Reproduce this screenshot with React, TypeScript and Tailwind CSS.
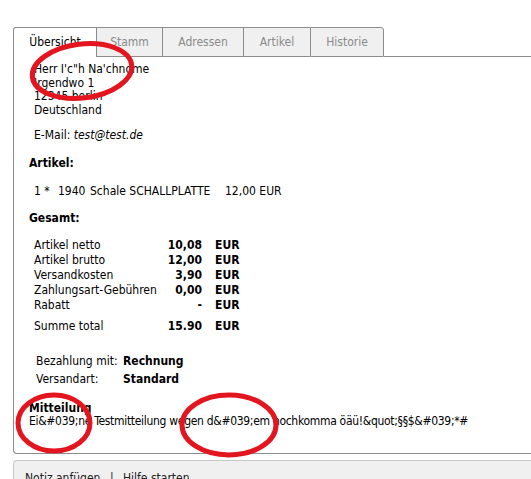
const tabs = [
  { label: "Übersicht", w: "w-[83px]", active: true },
  { label: "Stamm", w: "w-[66px]" },
  { label: "Adressen", w: "w-[81px]" },
  { label: "Artikel", w: "w-[67px]" },
  { label: "Historie", w: "w-[74px]" },
];

const totals = [
  { label: "Artikel netto", value: "10,08" },
  { label: "Artikel brutto", value: "12,00" },
  { label: "Versandkosten", value: "3,90" },
  { label: "Zahlungsart-Gebühren", value: "0,00" },
  { label: "Rabatt", value: "-" },
];

const font = { fontFamily: '"DejaVu Sans Condensed", "DejaVu Sans", sans-serif' };

function Markers() {
  // hand-drawn red circles over the order view
  return (
    <svg className="absolute inset-0 pointer-events-none" width="531" height="479">
      <g fill="none" stroke="#e3161f" strokeWidth="5">
        <ellipse cx="82" cy="71" rx="50" ry="27" transform="rotate(-7 82 71)" />
        <ellipse cx="54" cy="423" rx="36" ry="28" />
        <ellipse cx="229" cy="425" rx="47" ry="30" />
      </g>
    </svg>
  );
}

export default function App() {
  return (
    <div
      className="relative w-[531px] h-[479px] overflow-hidden bg-white text-[12px] leading-[13px] text-black"
      style={font}
    >
      <div className="pt-[27px] pl-[13px] w-[700px]">
        {/* Tabs */}
        <div className="flex h-[30px]">
          {tabs.map((t, i) => (
            <div
              key={t.label}
              className={`${t.w} flex items-center justify-center border-t border-l border-[#8c8c8c] ${
                i === 0 ? "rounded-tl-[3px] bg-white text-black" : "bg-[#f0f0f0] text-[#8a8a8a] border-b"
              } ${i === tabs.length - 1 ? "border-r rounded-tr-[3px]" : ""}`}
            >
              {t.label}
            </div>
          ))}
          <div className="flex-1 border-b border-[#8c8c8c]" />
        </div>

        {/* Panel */}
        <div className="h-[397px] border-l border-b border-[#8c8c8c] rounded-bl-[4px] pl-[15px] pt-[6px]">
          <div className="pl-[5px] leading-[13.5px]">
            <div>Herr I'c"h Na'chnome</div>
            <div>Irgendwo 1</div>
            <div>12345 berlin</div>
            <div>Deutschland</div>
          </div>
          <div className="pl-[5px] mt-[12px]">
            E-Mail: <i>test@test.de</i>
          </div>

          <div className="font-bold mt-[15px]">Artikel:</div>
          <div className="pl-[5px] mt-[15px] flex">
            <span className="w-[24px]">1 *</span>
            <span className="w-[32px]">1940</span>
            <span className="w-[135px]">Schale SCHALLPLATTE</span>
            <span>12,00 EUR</span>
          </div>

          <div className="font-bold mt-[14px]">Gesamt:</div>
          <div className="pl-[5px] mt-[13px] leading-[15px]">
            {totals.map((r) => (
              <div key={r.label} className="flex">
                <span className="w-[130px]">{r.label}</span>
                <span className="w-[38px] text-right font-bold">{r.value}</span>
                <span className="ml-[13px] font-bold">EUR</span>
              </div>
            ))}
            <div className="flex mt-[6px]">
              <span className="w-[130px]">Summe total</span>
              <span className="w-[38px] text-right font-bold">15.90</span>
              <span className="ml-[13px] font-bold">EUR</span>
            </div>
          </div>

          <div className="pl-[7px] mt-[18px] leading-[18px]">
            <div className="flex">
              <span className="w-[87px]">Bezahlung mit:</span>
              <span className="font-bold">Rechnung</span>
            </div>
            <div className="flex">
              <span className="w-[87px]">Versandart:</span>
              <span className="font-bold">Standard</span>
            </div>
          </div>

          <div className="mt-[14px] leading-[13px]">
            <div className="font-bold">Mitteilung</div>
            <div className="tracking-[-0.3px]">
              Ei&amp;#039;ne Testmitteilung wegen d&amp;#039;em hochkomma öäü!&amp;quot;§§$&amp;#039;*#
            </div>
          </div>
        </div>

        {/* Footer links */}
        <div className="mt-[6px] h-[40px] bg-[#f0f0f0] border-t border-l border-[#c8c8c8] rounded-tl-[4px] pl-[11px] pt-[11px] text-[#222]">
          Notiz anfügen <span className="mx-[6px]">|</span> Hilfe starten
        </div>
      </div>
      <Markers />
    </div>
  );
}
